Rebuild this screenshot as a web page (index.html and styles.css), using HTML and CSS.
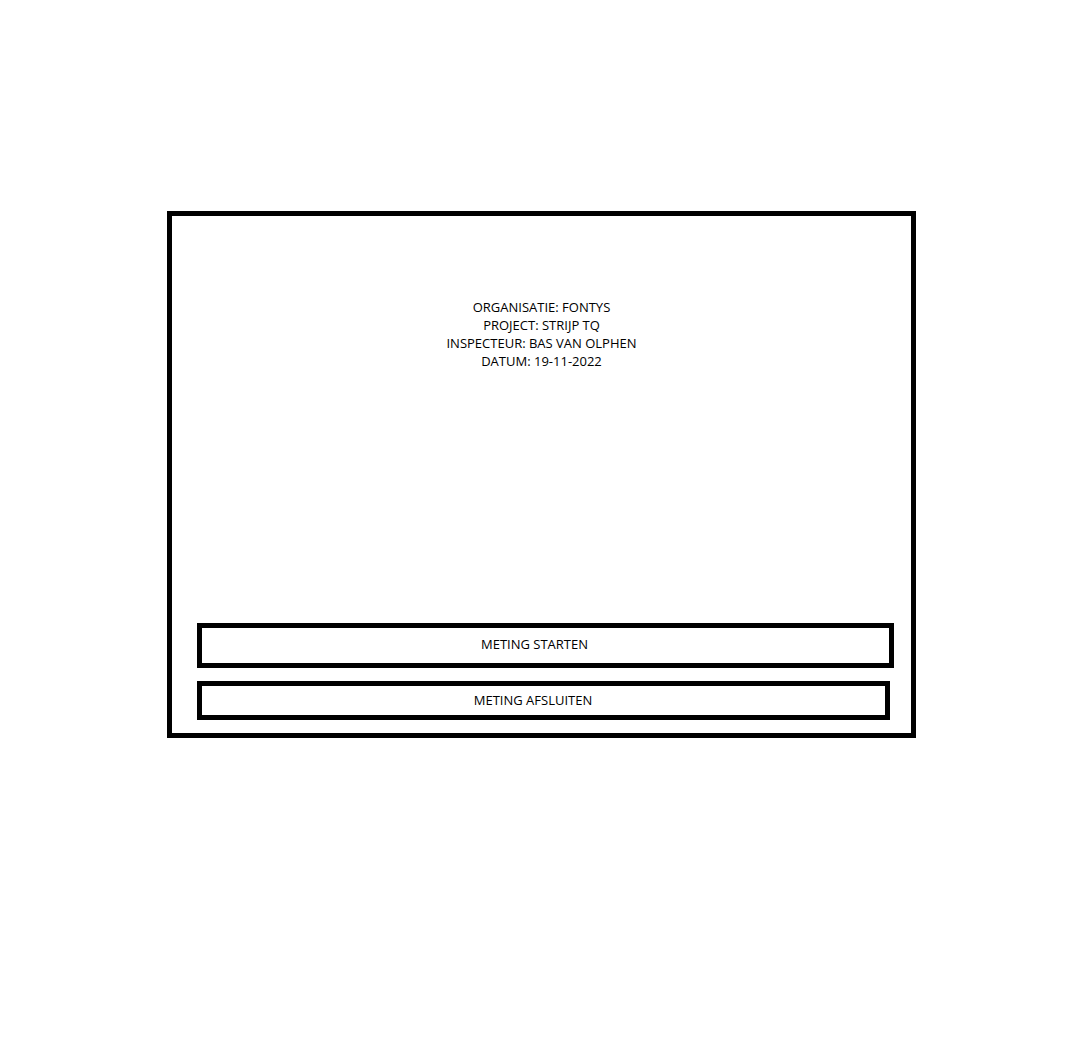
FILE: index.html
```html
<!DOCTYPE html>
<html lang="nl">
<head>
    <meta charset="UTF-8">
    <meta name="viewport" content="width=device-width, initial-scale=1.0">
    <title>Meting</title>

    <link rel="stylesheet" href="styles.css">
</head>
<body>
    <main class="page">
        <section class="panel">
            <div class="info">
                <p>ORGANISATIE: FONTYS</p>
                <p>PROJECT: STRIJP TQ</p>
                <p>INSPECTEUR: BAS VAN OLPHEN</p>
                <p>DATUM: 19-11-2022</p>
            </div>
            <div class="actions">
                <button class="btn btn-start">METING STARTEN</button>
                <button class="btn btn-end">METING AFSLUITEN</button>
            </div>
        </section>
    </main>
</body>
</html>
```

FILE: styles.css
```css
/* TYPOGRAPHY */

html {
    font-family: "Open Sans", "Noto Sans", sans-serif;
    font-size: 13px;
    color: #000;
}

body {
    margin: 0;
    background: #fff;
}

/* LAYOUT */

.page {
    padding: 211px 0 0 167px;
}

.panel {
    box-sizing: border-box;
    width: 749px;
    height: 527px;
    border: 5px solid #000;
    display: flex;
    flex-direction: column;
    justify-content: space-between;
    padding: 0 0 13px 25px;
}

/* INFO */

.info {
    margin-top: 82px;
    margin-left: -25px;
    text-align: center;
}

.info p {
    margin: 0;
    line-height: 18px;
}

/* BUTTONS */

.actions {
    display: flex;
    flex-direction: column;
    gap: 13px;
}

.btn {
    box-sizing: border-box;
    display: block;
    background: #fff;
    border: 5px solid #000;
    border-radius: 0;
    font: inherit;
    color: #000;
    padding: 0 22px 3px 0;
    text-align: center;
}

.btn-start {
    width: 697px;
    height: 45px;
}

.btn-end {
    width: 693px;
    height: 39px;
    padding-right: 21px;
    padding-bottom: 2px;
}
```
